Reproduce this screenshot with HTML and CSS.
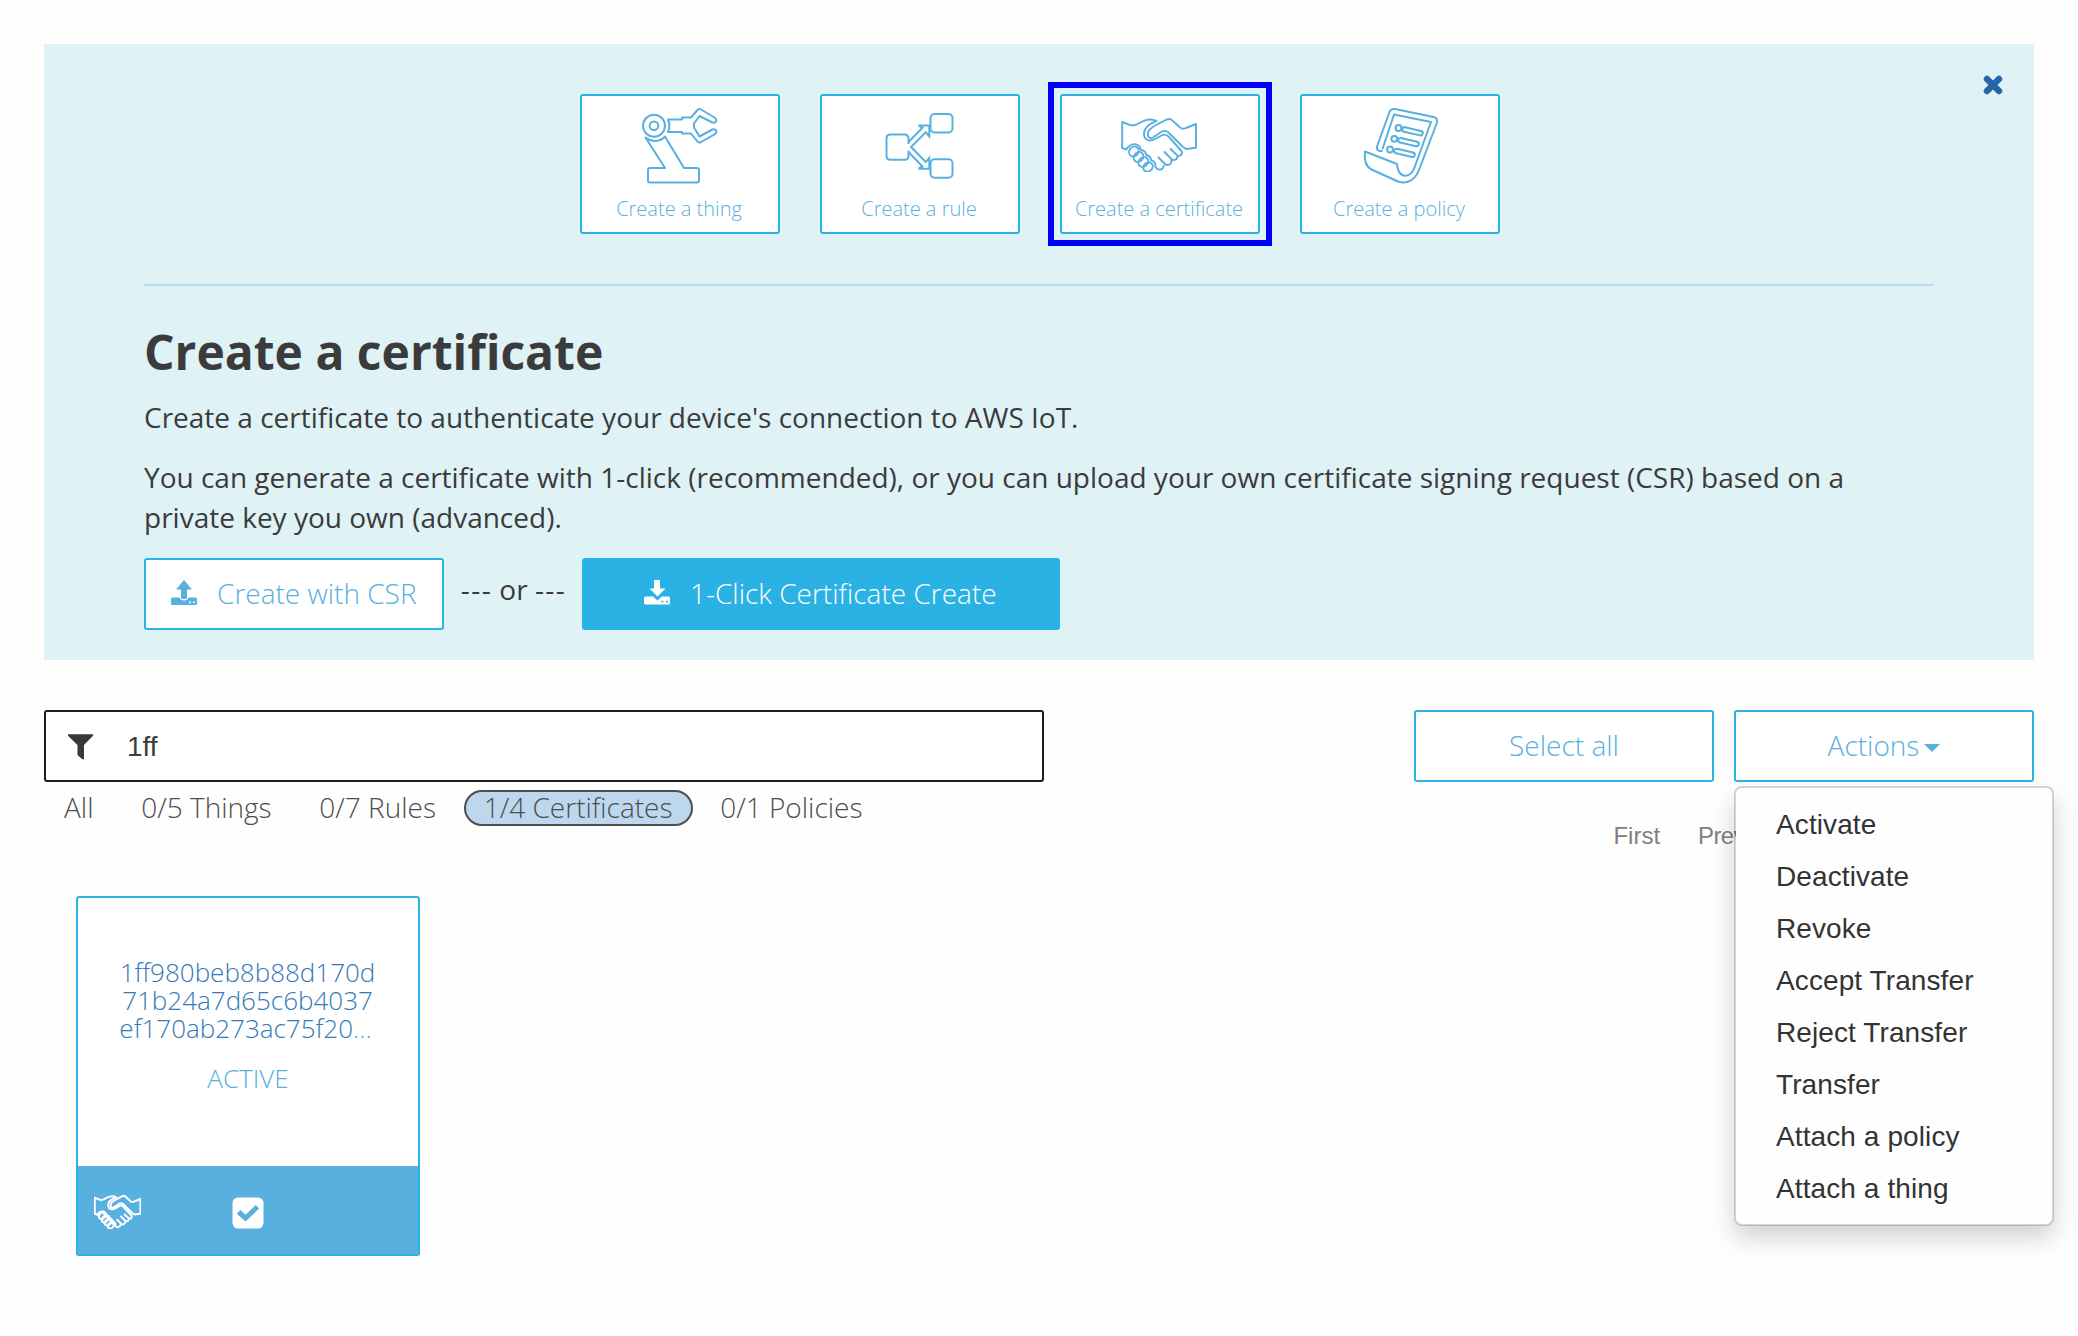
FILE: index.html
```html
<!DOCTYPE html>
<html lang="en">
<head>
<meta charset="utf-8">
<title>AWS IoT</title>
<link rel="stylesheet" href="styles.css">
</head>
<body>
<svg class="defs" width="0" height="0">
  <symbol id="handshake" viewBox="0 0 76 54">
    <g fill="none" stroke="currentColor" stroke-linejoin="round" stroke-linecap="round">
      <path d="M35.500 2.900C31 .6 24 1.600 18 5.300C14 7.800 11 8 8 6.700L1.200 4V30L5.500 31.500C7 28 11 25.300 15 26.300C18 27 19.300 29.300 19.800 31.800C22.700 32.400 24.800 34.300 25.300 37C28.200 37.700 30 39.800 30.200 42.300C33 43 34.800 45.500 34.400 49C37 52.800 41.500 52.500 42.800 48"/>
      <path d="M35.500 2.900C28 6 22.500 11 23 17C23.500 22.300 29 24 34 21L41.500 17C44 16 46 16.800 48 19L60.500 33C62 36.500 59 38.700 56.500 37.500L49.500 31M56.500 37.500C57 41.500 53 43 50.500 41L43.500 34M50.500 41C51.500 46 47 48.500 44 46L37.500 39.500"/>
      <path d="M75 6V29.800L65 31L61.500 28.500L47.500 14.500C45.500 12.500 43 12.300 40 14L32 19.500C29 21 26.500 19 26.800 15.500C27 11.500 31 9 36 6.500L45 1.800C48 .4 50.500 1 52.500 3.500L59 9.500C61 11 63 11 65 10Z"/>
      <ellipse cx="12.800" cy="33.500" rx="4.500" ry="5.300" transform="rotate(35 12.800 33.500)"/>
      <ellipse cx="17.500" cy="39" rx="4.500" ry="5.300" transform="rotate(40 17.500 39)"/>
      <ellipse cx="22.300" cy="44" rx="4.500" ry="5.300" transform="rotate(45 22.300 44)"/>
      <ellipse cx="27" cy="49" rx="5" ry="4.200" transform="rotate(-35 27 49)"/>
    </g>
  </symbol>
</svg>

<section class="wizard">
  <button class="close" aria-label="Close">
    <svg width="20" height="20" viewBox="0 0 20 20"><path d="M4 4L16 16M16 4L4 16" stroke="#2666a8" stroke-width="6.500" stroke-linecap="round"/></svg>
  </button>
  <nav class="tiles">
    <a class="tile">
      <svg class="tile-icon" width="80" height="80" viewBox="0 0 80 80" fill="none" stroke="currentColor" stroke-width="2" stroke-linejoin="round">
        <circle cx="14" cy="19.700" r="11"/><circle cx="14" cy="19.700" r="4.300"/>
        <path d="M28 13.500H42V11.500H51L57 4.500C58 3 59.500 2.600 61 3.500L74.500 11.500C78 14 76 17.500 72.500 16.500L59.500 10L54 17.500V21.500L59.500 30.500L72.500 23.500C76 22.500 78 26 74.500 28.300L61 36C59.500 36.800 58 36.500 57 35L51 27.500H42V26H28C29.800 22 29.800 17.500 28 13.500Z"/>
        <path d="M5.500 31.500C12 36.500 20 36 25 30.500L44 62H57Q59 62 59 64V74.500Q59 76.500 57 76.500H10Q8 76.500 8 74.500V64Q8 62 10 62H25Z"/>
      </svg>
      <span>Create a thing</span>
    </a>
    <a class="tile">
      <svg class="tile-icon" width="80" height="80" viewBox="0 0 80 80" fill="none" stroke="currentColor" stroke-width="2">
        <rect x="50.500" y="8" width="22" height="18.500" rx="4"/>
        <rect x="50.500" y="53.300" width="22" height="18.500" rx="4"/>
        <path d="M28.500 38V33Q28.500 28.500 24.500 28.500H10.500Q6.500 28.500 6.500 32.500V49.500Q6.500 53.800 10.500 53.800H24.500Q28.500 53.800 28.500 49.500V44.500"/>
        <path d="M28.500 36L42.500 21.700L38.500 19.500H49.300V30.500L45.800 26.300L31 41L45.800 56L49.300 52V62.700H38.500L42.500 60.500L28.500 46"/>
      </svg>
      <span>Create a rule</span>
    </a>
    <a class="tile tile-marked">
      <svg class="tile-icon tile-hands" width="76" height="54" stroke-width="1.900"><use href="#handshake"/></svg>
      <span>Create a certificate</span>
    </a>
    <a class="tile">
      <svg class="tile-icon" width="80" height="80" viewBox="-3.500 0 80 80" fill="none" stroke="currentColor" stroke-width="2" stroke-linejoin="round">
        <path d="M19 44.500C16 46 12.500 44 13.500 40.500L26 6C27 3.500 28.500 2.600 31.500 3L70 11C73 11.700 74.300 13.500 73.500 16.500L55.500 64C52 73 44.500 79 34.500 75.500L8 63.500C2 60.500 .5 54 1.500 45.500L33.500 58C34 66 37.500 70 42 69.700C46.500 69.500 49 67 51 61.500L67.500 16L30.500 8.500L19 43"/>
        <circle cx="35" cy="22" r="2.900"/><circle cx="30.800" cy="32.800" r="2.900"/><circle cx="26.500" cy="43.500" r="2.900"/>
        <rect x="38.500" y="23" width="21" height="4.600" rx="2.300" transform="rotate(13 49 25.300)"/>
        <rect x="34.500" y="33.800" width="21" height="4.600" rx="2.300" transform="rotate(13 45 36.100)"/>
        <rect x="30.500" y="44.600" width="21" height="4.600" rx="2.300" transform="rotate(13 41 46.900)"/>
      </svg>
      <span>Create a policy</span>
    </a>
  </nav>
  <div class="wizard-body">
    <h1>Create a certificate</h1>
    <p>Create a certificate to authenticate your device's connection to AWS IoT.</p>
    <p>You can generate a certificate with 1-click (recommended), or you can upload your own certificate signing request (CSR) based on a private key you own (advanced).</p>
    <div class="choices">
      <button class="btn btn-csr">
        <svg width="26" height="26" viewBox="0 0 26 26" fill="currentColor"><path d="M13 0L21 9.500H16V17.500Q16 19 14.500 19H11.500Q10 19 10 17.500V9.500H5Z"/><path fill-rule="evenodd" d="M1.500 17.500H8.300Q9.500 20.500 13 20.500T17.700 17.500H24.500Q26 17.500 26 19V23.500Q26 25 24.500 25H1.500Q0 25 0 23.500V19Q0 17.500 1.500 17.500ZM18 21.500V23.300H19.800V21.500ZM22 21.500V23.300H23.800V21.500Z"/></svg>
        <span>Create with CSR</span>
      </button>
      <span class="or"><span class="dashes">---</span> or <span class="dashes">---</span></span>
      <button class="btn btn-primary">
        <svg width="26" height="26" viewBox="0 0 26 26" fill="currentColor"><path d="M11 0H15Q16 0 16 1V8.500H21.500L13.500 16.500L5.500 8.500H10V1Q10 0 11 0Z"/><path fill-rule="evenodd" d="M1.500 16.500H9L13.500 20.500L18 16.500H24.500Q26 16.500 26 18V23Q26 24.500 24.500 24.500H1.500Q0 24.500 0 23V18Q0 16.500 1.500 16.500ZM17.500 20.800V22.600H19.300V20.800ZM22 20.800V22.600H23.800V20.800Z"/></svg>
        <span>1-Click Certificate Create</span>
      </button>
    </div>
  </div>
</section>

<section class="toolbar">
  <div class="search">
    <svg width="26" height="26" viewBox="0 0 26 26"><path d="M.5 .3H24.500Q26 .6 24.800 2L16 11V24.500Q15.500 26 14 25L9.500 21V11L.2 2Q-.5 .6 .5 .3Z" fill="#383838"/></svg>
    <span>1ff</span>
  </div>
  <button class="btn btn-side">Select all</button>
  <div class="dropdown">
    <button class="btn btn-side">Actions<i class="caret"></i></button>
    <ul class="menu">
      <li>Activate</li>
      <li>Deactivate</li>
      <li>Revoke</li>
      <li>Accept Transfer</li>
      <li>Reject Transfer</li>
      <li>Transfer</li>
      <li>Attach a policy</li>
      <li>Attach a thing</li>
    </ul>
  </div>
</section>

<section class="subbar">
  <div class="filters">
    <a>All</a><a>0/5 Things</a><a>0/7 Rules</a><a class="on">1/4 Certificates</a><a>0/1 Policies</a>
  </div>
  <div class="pager"><a>First</a><a class="prev">Prev</a></div>
</section>

<article class="card">
  <div class="card-body">
    <div class="card-id"><a>1ff980beb8b88d170d<br>71b24a7d65c6b4037<br>ef170ab273ac75f20</a><span class="more">...</span></div>
    <div class="card-status">ACTIVE</div>
  </div>
  <footer class="card-foot">
    <svg class="card-hands" width="47" height="34" stroke-width="3.200"><use href="#handshake"/></svg>
    <svg class="check" width="32" height="32" viewBox="0 0 32 32"><rect x=".5" y=".5" width="31" height="31" rx="5.500" fill="#fff"/><path d="M6.500 14.800L13.500 21.200L25.500 9.800" fill="none" stroke="#58b0df" stroke-width="5"/></svg>
  </footer>
</article>
</body>
</html>
```
FILE: styles.css
```css
* { box-sizing: border-box; }

body {
  margin: 0;
  padding: 44px;
  height: 1336px;
  overflow: hidden;
  background: #fefefe;
  color: #3b3b3b;
  font: 400 28px/40px "Open Sans", sans-serif;
}

button { font: inherit; color: inherit; background: none; border: 0; padding: 0; }
svg { display: block; flex: none; }
.defs { position: absolute; }

.wizard {
  position: relative;
  height: 616px;
  padding: 50px 100px 0;
  background: #dff2f6;
}
.close { position: absolute; top: 31px; right: 31px; }

.tiles {
  display: flex;
  justify-content: center;
  gap: 40px;
  padding: 0 0 50px 2px;
  border-bottom: 2px solid #b9def2;
}
.tile {
  position: relative;
  width: 200px;
  height: 140px;
  padding: 10px 2px 0 0;
  display: flex;
  flex-direction: column;
  align-items: center;
  background: #fff;
  border: 2px solid #2ab2e4;
  border-radius: 3px;
  color: #58b0df;
  font-weight: 300;
  font-size: 20px;
  line-height: 30px;
}
.tile-icon { height: 80px; margin: 0 0 8px 1px; }
.tile-hands { height: 54px; margin: 12px 0 22px; }
.tile-marked::after {
  content: "";
  position: absolute;
  inset: -14px;
  border: 6px solid #0000ff;
}

.wizard-body { padding-top: 31px; }
h1 { margin: 0; font-size: 48px; line-height: 70px; font-weight: 700; }
p { margin: 0 0 20px; }
h1 + p { margin-top: 10px; }

.choices { display: flex; height: 72px; margin-top: 21px; }
.btn {
  height: 72px;
  padding-bottom: 2px;
  display: flex;
  align-items: center;
  border: 2px solid #2ab2e4;
  border-radius: 3px;
  background: #fff;
  color: #58b0df;
  font-weight: 300;
  white-space: nowrap;
}
.btn-csr { width: 300px; padding-left: 25px; gap: 20px; }
.or { width: 138px; padding: 11px 0 0 1px; text-align: center; white-space: nowrap; }
.dashes { letter-spacing: 1.4px; }
.btn-primary { width: 478px; padding-left: 60px; gap: 20px; background: #2ab2e4; color: #fff; }

.toolbar { display: flex; gap: 20px; margin-top: 50px; }
.search {
  width: 1000px;
  height: 72px;
  margin-right: auto;
  padding: 2px 0 0 22px;
  display: flex;
  align-items: center;
  gap: 33px;
  border: 2px solid #1b1d21;
  border-radius: 3px;
  background: #fff;
}
.search span { font-family: "Liberation Sans", sans-serif; }
.btn-side { width: 300px; justify-content: center; }
.caret {
  margin: 5px 0 0 5px;
  border: 8px solid transparent;
  border-top-color: #58b0df;
  border-bottom: 0;
}

.dropdown { position: relative; }
.menu {
  position: absolute;
  top: 76px;
  left: 0;
  width: 320px;
  margin: 0;
  padding: 11px 40px 9px;
  list-style: none;
  background: #fefefe;
  background-clip: padding-box;
  border: 2px solid rgba(0, 0, 0, .16);
  border-radius: 8px;
  box-shadow: 0 12px 24px rgba(0, 0, 0, .175);
  font: 28px/52px "Liberation Sans", sans-serif;
  letter-spacing: .1px;
  color: #333;
}

.subbar { display: flex; height: 114px; }
.filters { display: flex; align-items: flex-start; padding-top: 8px; color: #4d4d4d; font-weight: 300; }
.filters a {
  height: 36px;
  padding: 0 18px;
  margin-right: 7.700px;
  line-height: 30px;
  border: 2px solid transparent;
  border-radius: 18px;
  white-space: nowrap;
}
.filters .on { background: #bdd7ee; border-color: #4d4d4d; }
.pager {
  display: flex;
  gap: 38px;
  margin-left: auto;
  padding: 34px 289px 0 0;
  font: 24px/40px "Liberation Sans", sans-serif;
  color: #808080;
}
.prev { letter-spacing: -.6px; }

.card {
  width: 344px;
  height: 360px;
  margin-left: 32px;
  display: flex;
  flex-direction: column;
  border: 2px solid #2ab2e4;
  border-radius: 3px;
  background: #fff;
  color: #58b0df;
  font-weight: 300;
  font-size: 26px;
  line-height: 28px;
  text-align: center;
}
.card-body { flex: 1; padding-top: 60px; }
.card-id { padding-right: 1px; }
.card-id a { color: #337ab7; }
.more { margin-right: 4px; }
.card-status { margin-top: 22px; }
.card-foot { height: 88px; display: flex; background: #58b0df; color: #fff; }
.card-hands { margin: 29px 0 0 16px; }
.check { margin: 31px 0 0 91px; }
```
